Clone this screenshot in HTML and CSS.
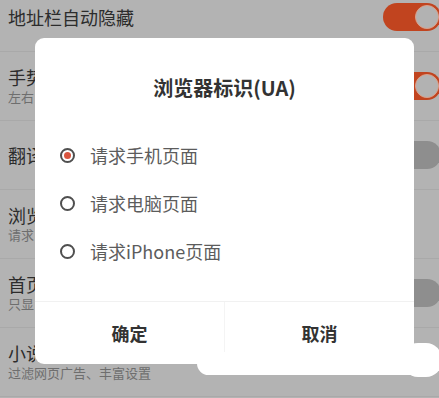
FILE: index.html
```html
<!DOCTYPE html>
<html lang="zh-CN">
<head>
<meta charset="utf-8">
<link rel="stylesheet" href="styles.css">
</head>
<body>
<div class="screen">
  <div class="list">
    <div class="row">
      <div class="text"><div class="title">地址栏自动隐藏</div></div>
      <div class="toggle on"><span class="knob"></span></div>
    </div>
    <div class="row">
      <div class="text clip"><div class="title">手势</div><div class="sub">左右</div></div>
      <div class="toggle on"><span class="knob"></span></div>
    </div>
    <div class="row">
      <div class="text clip"><div class="title">翻译</div></div>
      <div class="toggle off"><span class="knob"></span></div>
    </div>
    <div class="row">
      <div class="text clip"><div class="title">浏览</div><div class="sub">请求</div></div>
    </div>
    <div class="row">
      <div class="text clip"><div class="title">首页</div><div class="sub">只显</div></div>
      <div class="toggle off"><span class="knob"></span></div>
    </div>
    <div class="row">
      <div class="text"><div class="title clip">小说</div><div class="sub">过滤网页广告、丰富设置</div></div>
    </div>
  </div>

  <div class="dialog">
    <div class="dialog-title">浏览器标识(UA)</div>
    <div class="options">
      <div class="option"><span class="radio checked"></span><span class="label">请求手机页面</span></div>
      <div class="option"><span class="radio"></span><span class="label">请求电脑页面</span></div>
      <div class="option"><span class="radio"></span><span class="label">请求iPhone页面</span></div>
    </div>
    <div class="buttons">
      <div class="btn">确定</div>
      <div class="btn">取消</div>
    </div>
  </div>

  <div class="blob blob-a"></div>
  <div class="blob blob-b"></div>
</div>
</body>
</html>
```
FILE: styles.css
```css
* { box-sizing: border-box; }
html, body { margin: 0; padding: 0; }
body {
  width: 439px;
  height: 398px;
  overflow: hidden;
  background: #b3b3b3;
  font-family: "Noto Sans CJK SC", "Noto Sans", sans-serif;
}
.screen {
  position: relative;
  width: 439px;
  height: 398px;
  overflow: hidden;
}
.list {
  margin-top: -17px;
}
.row {
  height: 69px;
  display: flex;
  align-items: center;
  justify-content: space-between;
  padding-left: 8px;
  border-bottom: 1px solid #a9a9a9;
}
.clip {
  width: 27px;
  overflow: hidden;
  white-space: nowrap;
}
.title {
  font-size: 18px;
  line-height: 22px;
  color: #2c2c2c;
}
.sub {
  font-size: 13px;
  line-height: 18px;
  color: #6e6e6e;
}
.toggle {
  width: 58px;
  height: 28px;
  border-radius: 14px;
  margin-right: -2px;
  display: flex;
  align-items: center;
  padding: 0 2px;
  flex: none;
}
.toggle.on {
  background: #c1441f;
  justify-content: flex-end;
}
.toggle.off {
  background: #8e8e8e;
  justify-content: flex-start;
}
.knob {
  width: 24px;
  height: 24px;
  border-radius: 50%;
  background: #b2b2b2;
  border: 1.5px solid #dba08a;
}
.toggle.off .knob { border-color: #a0a0a0; }

.dialog {
  position: absolute;
  left: 35px;
  top: 38px;
  width: 379px;
  height: 326px;
  background: #ffffff;
  border-radius: 9px;
  display: flex;
  flex-direction: column;
}
.dialog-title {
  margin-top: 37px;
  text-align: center;
  font-size: 20px;
  line-height: 26px;
  font-weight: 700;
  color: #333333;
}
.options {
  margin-top: 30px;
  display: flex;
  flex-direction: column;
}
.option {
  height: 48px;
  display: flex;
  align-items: center;
  padding-left: 25px;
  gap: 15px;
}
.radio {
  width: 15px;
  height: 15px;
  border-radius: 50%;
  border: 2px solid #4f4f4f;
  display: flex;
  align-items: center;
  justify-content: center;
  flex: none;
}
.radio.checked::after {
  content: "";
  width: 7px;
  height: 7px;
  border-radius: 50%;
  background: #d9553f;
}
.label {
  font-size: 18px;
  line-height: 24px;
  color: #5c5c5c;
}
.buttons {
  margin-top: auto;
  height: 63px;
  display: flex;
  border-top: 1px solid #f1f1f1;
}
.btn {
  flex: 1;
  display: flex;
  align-items: center;
  justify-content: center;
  font-size: 18px;
  font-weight: 600;
  color: #333333;
}
.btn + .btn {
  border-left: 1px solid #f4f4f4;
}
.blob {
  position: absolute;
  background: #ffffff;
}
.blob-a {
  left: 197px;
  top: 352px;
  width: 242px;
  height: 23px;
  border-radius: 12px;
}
.blob-b {
  left: 402px;
  top: 343px;
  width: 40px;
  height: 34px;
  border-radius: 16px;
}
```
